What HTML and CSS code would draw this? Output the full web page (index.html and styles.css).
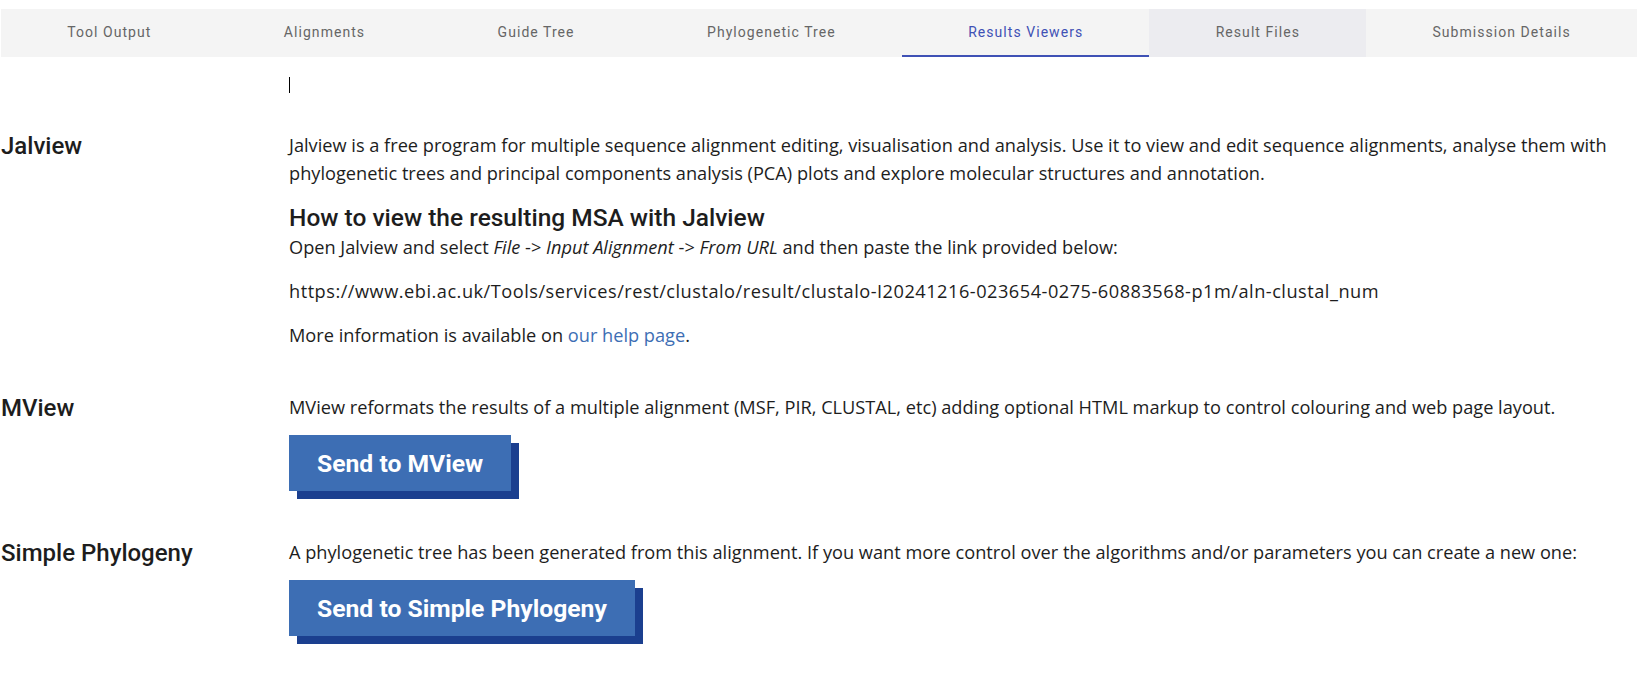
FILE: index.html
```html
<!DOCTYPE html>
<html lang="en">
<head>
<meta charset="utf-8">
<title>Results Viewers</title>
<link rel="stylesheet" href="styles.css">
</head>
<body>
<nav class="tabs">
  <a class="tab">Tool Output</a>
  <a class="tab">Alignments</a>
  <a class="tab">Guide Tree</a>
  <a class="tab">Phylogenetic Tree</a>
  <a class="tab tab-active">Results Viewers</a>
  <a class="tab tab-hover">Result Files</a>
  <a class="tab">Submission Details</a>
</nav>
<main class="viewers">
  <div class="caret-row"><span class="caret"></span></div>

  <section class="viewer">
    <h2 class="viewer-name">Jalview</h2>
    <div class="viewer-body">
      <p>Jalview is a free program for multiple sequence alignment editing, visualisation and analysis. Use it to view and edit sequence alignments, analyse them with phylogenetic trees and principal components analysis (PCA) plots and explore molecular structures and annotation.</p>
      <h3 class="viewer-sub">How to view the resulting MSA with Jalview</h3>
      <p>Open Jalview and select <em>File</em> -&gt; <em>Input Alignment</em> -&gt; <em>From URL</em> and then paste the link provided below:</p>
      <p class="url">https://www.ebi.ac.uk/Tools/services/rest/clustalo/result/clustalo-I20241216-023654-0275-60883568-p1m/aln-clustal_num</p>
      <p>More information is available on <a class="link" href="#">our help page</a>.</p>
    </div>
  </section>

  <section class="viewer">
    <h2 class="viewer-name">MView</h2>
    <div class="viewer-body">
      <p class="lead">MView reformats the results of a multiple alignment (MSF, PIR, CLUSTAL, etc) adding optional HTML markup to control colouring and web page layout.</p>
      <div class="btn-wrap"><button class="btn">Send to MView</button></div>
    </div>
  </section>

  <section class="viewer">
    <h2 class="viewer-name">Simple Phylogeny</h2>
    <div class="viewer-body">
      <p class="lead">A phylogenetic tree has been generated from this alignment. If you want more control over the algorithms and/or parameters you can create a new one:</p>
      <div class="btn-wrap"><button class="btn">Send to Simple Phylogeny</button></div>
    </div>
  </section>
</main>
</body>
</html>
```

FILE: styles.css
```css
html, body {
  margin: 0;
  padding: 0;
  background: #ffffff;
}

body {
  font-family: Roboto, "Liberation Sans", sans-serif;
  color: #1d1d1d;
}

.tabs {
  display: flex;
  margin: 9px 0 0 1px;
  background: #f4f4f4;
  height: 48px;
}

.tab {
  flex: 1 1 auto;
  text-align: center;
  font-family: Roboto, sans-serif;
  font-size: 14px;
  letter-spacing: 1.05px;
  line-height: 46px;
  color: #666666;
  border-bottom: 2px solid transparent;
  white-space: nowrap;
  cursor: pointer;
}

.tab-active {
  color: #3f51b5;
  border-bottom-color: #3f51b5;
}

.tab-hover {
  background: #ececf0;
}

.viewers {
  padding: 0 17px 0 1px;
}

.caret-row {
  margin: 20px 0 38px 288px;
  height: 16px;
}

.caret {
  display: block;
  width: 1px;
  height: 16px;
  background: #000;
}

.viewer {
  display: grid;
  grid-template-columns: 288px 1fr;
  margin-bottom: 28px;
}

.viewer-name {
  margin: 0;
  font-family: Roboto, sans-serif;
  font-size: 24px;
  line-height: 30px;
  font-weight: 500;
  color: #1d1d1d;
}

.viewer-body p {
  margin: 0 0 16px;
  font-family: "Open Sans", "Noto Sans", sans-serif;
  font-size: 18.2px;
  line-height: 28px;
  color: #1d1d1d;
}

.viewer-body .lead {
  margin-bottom: 14px;
}

.viewer-body .url {
  letter-spacing: 0.5px;
}

.viewer-sub {
  margin: 0;
  font-family: Roboto, sans-serif;
  font-size: 24.5px;
  line-height: 30px;
  font-weight: 500;
  color: #1d1d1d;
}

.link {
  color: #3d6eb4;
  text-decoration: none;
}

.btn-wrap {
  display: flex;
  align-items: flex-start;
  margin-bottom: 19px;
}

.btn {
  height: 56px;
  padding: 0 28px;
  border: 0;
  background: #3d6eb4;
  color: #ffffff;
  font-family: Roboto, sans-serif;
  font-size: 24.7px;
  font-weight: 700;
  box-shadow: 8px 8px 0 #1b3f8f;
  cursor: pointer;
}
```
